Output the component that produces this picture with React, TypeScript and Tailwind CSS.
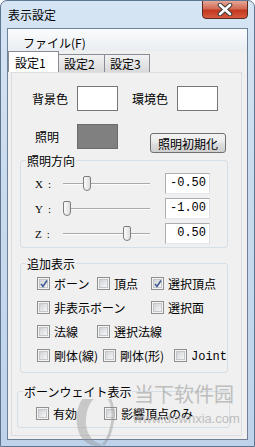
import type { ReactNode } from 'react'

const JP = "font-['Noto_Sans_CJK_JP','Noto_Sans',sans-serif]"
const MONO = "font-['Liberation_Mono',monospace]"

// ── Win7 風のチェックボックス ──
function Check({ checked = false, children, w }: { checked?: boolean; children: ReactNode; w?: string }) {
  return (
    <div className={`flex items-center gap-[4px] ${w ?? ''}`}>
      <span className="relative block w-[13px] h-[13px] shrink-0 border border-[#8e8f8f] bg-[#f4f4f4] p-[1px]">
        <span className="block w-full h-full border border-[#c3c7cc] bg-[linear-gradient(135deg,#cfd2d6,#f7f7f7)]" />
        {checked && (
          <svg className="absolute left-[1px] top-[1px]" width="10" height="10" viewBox="0 0 10 10">
            <path d="M2 5 L4 7.5 L8 1.5" fill="none" stroke="#3e5c91" strokeWidth="1.6" />
          </svg>
        )}
      </span>
      <span className="text-[12px] leading-[15px] text-black whitespace-nowrap">{children}</span>
    </div>
  )
}

// ── スライダー + 数値ボックス ──
function AxisRow({ axis, value }: { axis: string; value: number }) {
  return (
    <div className="flex items-center h-[25px] pl-[14px]">
      <span className="w-[28px] text-[11px] leading-[14px] font-['Liberation_Serif',serif]">
        {axis}<span className="ml-[5px]">:</span>
      </span>
      <div className="relative w-[87px] h-[16px]">
        <div className="absolute left-0 right-0 top-[7px] h-[1px] bg-[#a9a9a9]" />
        <div className="absolute left-0 right-0 top-[8px] h-[1px] bg-[#fdfdfd]" />
        <div className="absolute top-0 w-[8px] h-[15px] rounded-t-[2px] rounded-b-[4px] border border-[#7d7d7d] bg-[linear-gradient(90deg,#fbfbfb,#dedede)]"
          style={{ left: (value + 1) * 40 }} />
      </div>
      <div className={`ml-[15px] w-[45px] h-[21px] bg-white border border-[#abadb3] border-r-[#dbdfe6] border-b-[#e3e9ef] text-right pr-[3px] text-[12px] leading-[19px] ${MONO}`}>
        {value.toFixed(2)}
      </div>
    </div>
  )
}

// ── グループボックス: 見出しが枠線の上に乗る ──
function Group({ title, children, cls, inner }: { title: string; children: ReactNode; cls: string; inner: string }) {
  return (
    <div className={cls}>
      <span className="relative z-10 ml-[6px] block w-fit px-[1px] bg-[#f0f0f0] text-[12px] leading-[15px] text-black">{title}</span>
      <div className={`-mt-[8px] border border-[#d5dfe5] rounded-[3px] ${inner}`}>{children}</div>
    </div>
  )
}

export default function App() {
  return (
    <div className={`relative w-[255px] h-[447px] overflow-hidden rounded-t-[7px] border border-[#5e7590] bg-[linear-gradient(180deg,#d6e5f4_0%,#c9dbee_40%,#bed3ea_100%)] ${JP}`}>
      {/* タイトルバー */}
      <div className="flex justify-between h-[27px]">
        <span className="pl-[7px] pt-[6px] text-[12px] leading-[15px] text-black">表示設定</span>
        <div className="mr-[6px] w-[46px] h-[19px] -mt-px rounded-b-[4px] border border-[#5b2a22] bg-[linear-gradient(180deg,#e6a797_0%,#d26a55_45%,#c2391f_55%,#d65a3f_100%)] flex items-center justify-center">
          <svg width="16" height="13" viewBox="0 0 16 13">
            <path d="M3 2 L13 11 M13 2 L3 11" stroke="#3c3c3c" strokeWidth="4.6" strokeLinecap="round" />
            <path d="M3 2 L13 11 M13 2 L3 11" stroke="#ffffff" strokeWidth="2.6" strokeLinecap="round" />
          </svg>
        </div>
      </div>

      {/* クライアント領域 */}
      <div className="mx-[6px] h-[412px] border border-[#6f8197] bg-[#f0f0f0] flex flex-col">
        <div className="h-[22px] bg-[linear-gradient(180deg,#fbfcfd,#e9edf2)] pl-[15px] pt-[6px] text-[12px] leading-[15px]">ファイル(F)</div>

        {/* タブ */}
        <div className="flex items-end h-[21px]">
          <div className="relative z-10 w-[51px] h-[21px] bg-white border border-[#898c95] border-b-0 pl-[6px] pt-[3px] text-[12px] leading-[15px]">設定1</div>
          <div className="-ml-px w-[47px] h-[18px] border border-[#898c95] border-b-0 bg-[linear-gradient(180deg,#f2f2f2,#d9d9d9)] pl-[5px] pt-[1px] text-[12px] leading-[15px]">設定2</div>
          <div className="-ml-px w-[46px] h-[18px] border border-[#898c95] border-b-0 bg-[linear-gradient(180deg,#f2f2f2,#d9d9d9)] pl-[5px] pt-[1px] text-[12px] leading-[15px]">設定3</div>
        </div>

        {/* タブパネル */}
        <div className="ml-[3px] mr-[5px] h-[364px] border border-[#dadde2] bg-[#f0f0f0]">
          <div className="mt-[13px] flex items-center h-[25px] pl-[20px]">
            <span className="w-[45px] text-[12px] leading-[15px]">背景色</span>
            <div className="w-[41px] h-[25px] bg-white border border-[#767676]" />
            <span className="ml-[14px] w-[45px] text-[12px] leading-[15px]">環境色</span>
            <div className="w-[41px] h-[25px] bg-white border border-[#767676]" />
          </div>

          <div className="mt-[13px] flex items-start pl-[20px]">
            <span className="w-[45px] h-[25px] flex items-center pl-[3px] text-[12px] leading-[15px]">照明</span>
            <div className="w-[41px] h-[25px] bg-[#808080] border border-[#6c6c6c]" />
            <button className="ml-[32px] mt-[9px] w-[76px] h-[20px] rounded-[3px] border border-[#707070] bg-[linear-gradient(180deg,#f3f3f3_0%,#ebebeb_45%,#dddddd_55%,#cfcfcf_100%)] text-[12px] leading-[15px] text-black">
              照明初期化
            </button>
          </div>

          <Group title="照明方向" cls="ml-[8px] w-[208px]" inner="pt-[10px] pb-[1px]">
            <AxisRow axis="X" value={-0.5} />
            <AxisRow axis="Y" value={-1} />
            <AxisRow axis="Z" value={0.5} />
          </Group>

          <Group title="追加表示" cls="mt-[8px] ml-[8px] w-[208px]" inner="pt-[7px] pb-[4px] pl-[16px]">
            <div className="flex items-center h-[24px]">
              <Check checked w="w-[60px]">ボーン</Check>
              <Check w="w-[54px]">頂点</Check>
              <Check checked>選択頂点</Check>
            </div>
            <div className="flex items-center h-[24px]">
              <Check w="w-[114px]">非表示ボーン</Check>
              <Check>選択面</Check>
            </div>
            <div className="flex items-center h-[24px]">
              <Check w="w-[60px]">法線</Check>
              <Check>選択法線</Check>
            </div>
            <div className="flex items-center h-[25px]">
              <Check w="w-[66px]">剛体(線)</Check>
              <Check w="w-[71px]">剛体(形)</Check>
              <Check><span className={MONO}>Joint</span></Check>
            </div>
          </Group>

          <Group title="ボーンウェイト表示" cls="mt-[11px] ml-[5px] w-[213px]" inner="pt-[9px] pb-[2px] pl-[18px]">
            <div className="flex items-center h-[24px]">
              <Check w="w-[68px]">有効</Check>
              <Check>影響頂点のみ</Check>
            </div>
          </Group>
        </div>
      </div>

      {/* 透かし */}
      <div className="absolute left-[68px] top-[384px] pointer-events-none opacity-40">
        <svg width="52" height="66" viewBox="0 0 52 66">
          <path d="M30 6 C12 6 6 24 8 40 C10 56 22 64 34 60 C22 58 16 46 17 34 C18 20 24 10 36 9 Z" fill="#8c8c8c" />
          <path d="M36 9 C44 14 46 30 42 44 C40 52 36 58 34 60" fill="none" stroke="#8c8c8c" strokeWidth="3" />
          <path d="M26 62 Q32 66 38 62" fill="none" stroke="#e07aa0" strokeWidth="4" />
        </svg>
      </div>
      <div className="absolute left-[133px] top-[381px] pointer-events-none text-[20px] leading-[24px] text-[#a9a9a9] opacity-70">当下软件园</div>
      <div className="absolute left-[132px] top-[410px] pointer-events-none text-[13px] leading-[15px] text-[#a9a9a9] opacity-70 font-['Liberation_Sans',sans-serif]">www.downxia.com</div>
    </div>
  )
}
